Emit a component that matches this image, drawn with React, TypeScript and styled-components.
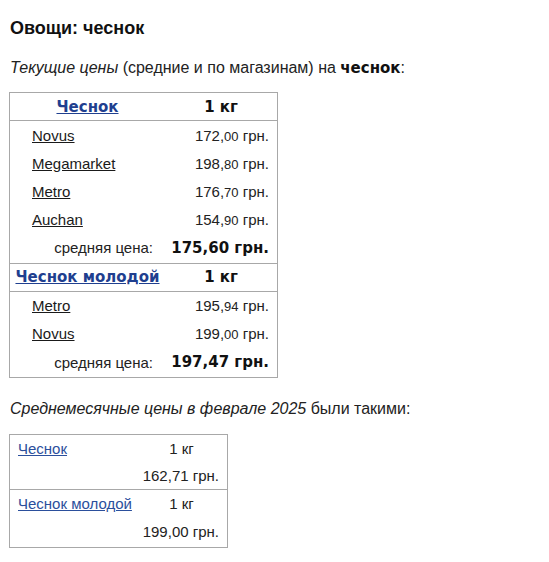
import styled, { createGlobalStyle } from 'styled-components';

const GlobalStyle = createGlobalStyle`
  body {
    margin: 0;
    background: #fff;
    font-family: "Liberation Sans", Arial, sans-serif;
    color: #222;
  }
`;

type Store = { name: string; price: string; cents: string };
type Product = { title: string; unit: string; stores: Store[]; avg: string };

const current: Product[] = [
  {
    title: 'Чеснок',
    unit: '1 кг',
    stores: [
      { name: 'Novus', price: '172', cents: '00' },
      { name: 'Megamarket', price: '198', cents: '80' },
      { name: 'Metro', price: '176', cents: '70' },
      { name: 'Auchan', price: '154', cents: '90' },
    ],
    avg: '175,60 грн.',
  },
  {
    title: 'Чеснок молодой',
    unit: '1 кг',
    stores: [
      { name: 'Metro', price: '195', cents: '94' },
      { name: 'Novus', price: '199', cents: '00' },
    ],
    avg: '197,47 грн.',
  },
];

const monthly = [
  { title: 'Чеснок', unit: '1 кг', price: '162,71 грн.' },
  { title: 'Чеснок молодой', unit: '1 кг', price: '199,00 грн.' },
];

export default function App() {
  return (
    <Page>
      <GlobalStyle />
      <Title>Овощи: чеснок</Title>
      <Lead>
        <em>Текущие цены</em> (средние и по магазинам) на <strong>чеснок</strong>:
      </Lead>

      <PriceTable>
        {current.map((p) => (
          <tbody key={p.title}>
            <tr>
              <HeadCell>
                <HeadLink href="#">{p.title}</HeadLink>
              </HeadCell>
              <HeadCell>{p.unit}</HeadCell>
            </tr>
            {p.stores.map((s) => (
              <tr key={s.name}>
                <StoreCell>
                  <StoreLink href="#">{s.name}</StoreLink>
                </StoreCell>
                <PriceCell>
                  {s.price},<Cents>{s.cents}</Cents> грн.
                </PriceCell>
              </tr>
            ))}
            <AvgRow>
              <AvgLabel>средняя цена:</AvgLabel>
              <AvgPrice>{p.avg}</AvgPrice>
            </AvgRow>
          </tbody>
        ))}
      </PriceTable>

      <Lead $top={20}>
        <em>Среднемесячные цены в феврале 2025</em> были такими:
      </Lead>

      <MonthTable>
        {monthly.map((m) => (
          <tbody key={m.title}>
            <tr>
              <MonthName>
                <MonthLink href="#">{m.title}</MonthLink>
              </MonthName>
              <MonthUnit>{m.unit}</MonthUnit>
            </tr>
            <tr>
              <td />
              <MonthPrice>{m.price}</MonthPrice>
            </tr>
          </tbody>
        ))}
      </MonthTable>
    </Page>
  );
}

const Page = styled.div`
  padding: 17px 0 0 10px;
  width: 539px;
`;

const Title = styled.h1`
  margin: 0;
  font-size: 18px;
  font-weight: bold;
  line-height: 22px;
  color: #111;
`;

const Lead = styled.p<{ $top?: number }>`
  margin: ${(p) => p.$top ?? 18}px 0 0;
  font-size: 16px;
  line-height: 22px;
  color: #222;

  em {
    font-style: italic;
  }
  strong {
    font-family: "DejaVu Sans", Verdana, sans-serif;
    font-size: 15px;
    font-weight: bold;
    color: #111;
  }
`;

const PriceTable = styled.table`
  margin: 13px 0 0 -1px;
  width: 269px;
  border-collapse: collapse;
  border: 1px solid #a8a8a8;

  tbody + tbody tr:first-child td {
    border-top: 1px solid #a8a8a8;
  }
`;

const HeadCell = styled.td`
  height: 27px;
  padding: 0;
  text-align: center;
  border-bottom: 1px solid #a8a8a8;
  font-family: "DejaVu Sans", Verdana, sans-serif;
  font-size: 15px;
  font-weight: bold;
  color: #111;

  &:first-child {
    width: 155px;
  }
`;

const HeadLink = styled.a`
  color: #1f3f8f;
  text-decoration: underline;
`;

const StoreCell = styled.td`
  height: 28px;
  padding: 0 0 0 22px;
  font-size: 15px;
`;

const StoreLink = styled.a`
  color: #1a1a1a;
  text-decoration: underline;
`;

const PriceCell = styled.td`
  padding: 0 8px 0 0;
  text-align: right;
  font-size: 15px;
  color: #222;
`;

const Cents = styled.span`
  font-size: 13px;
`;

const AvgRow = styled.tr`
  height: 30px;
`;

const AvgLabel = styled.td`
  padding: 0 12px 0 0;
  text-align: right;
  font-size: 15px;
  color: #222;
`;

const AvgPrice = styled.td`
  padding: 0 8px 0 0;
  text-align: right;
  font-family: "DejaVu Sans", Verdana, sans-serif;
  font-size: 15px;
  font-weight: bold;
  color: #111;
`;

const MonthTable = styled.table`
  margin: 14px 0 0 -1px;
  width: 219px;
  border-collapse: collapse;
  border: 1px solid #a8a8a8;

  tbody + tbody tr:first-child td {
    border-top: 1px solid #a8a8a8;
  }

  tbody:last-child tr:last-child td {
    height: 29px;
  }
`;

const MonthName = styled.td`
  width: 118px;
  height: 26px;
  padding: 0 0 0 8px;
  font-size: 15px;
  white-space: nowrap;
`;

const MonthLink = styled.a`
  color: #2b4f9c;
  text-decoration: underline;
`;

const MonthUnit = styled.td`
  text-align: center;
  font-size: 15px;
  color: #222;
`;

const MonthPrice = styled.td`
  height: 28px;
  padding: 0 8px 0 0;
  text-align: right;
  font-size: 15px;
  color: #222;
`;
